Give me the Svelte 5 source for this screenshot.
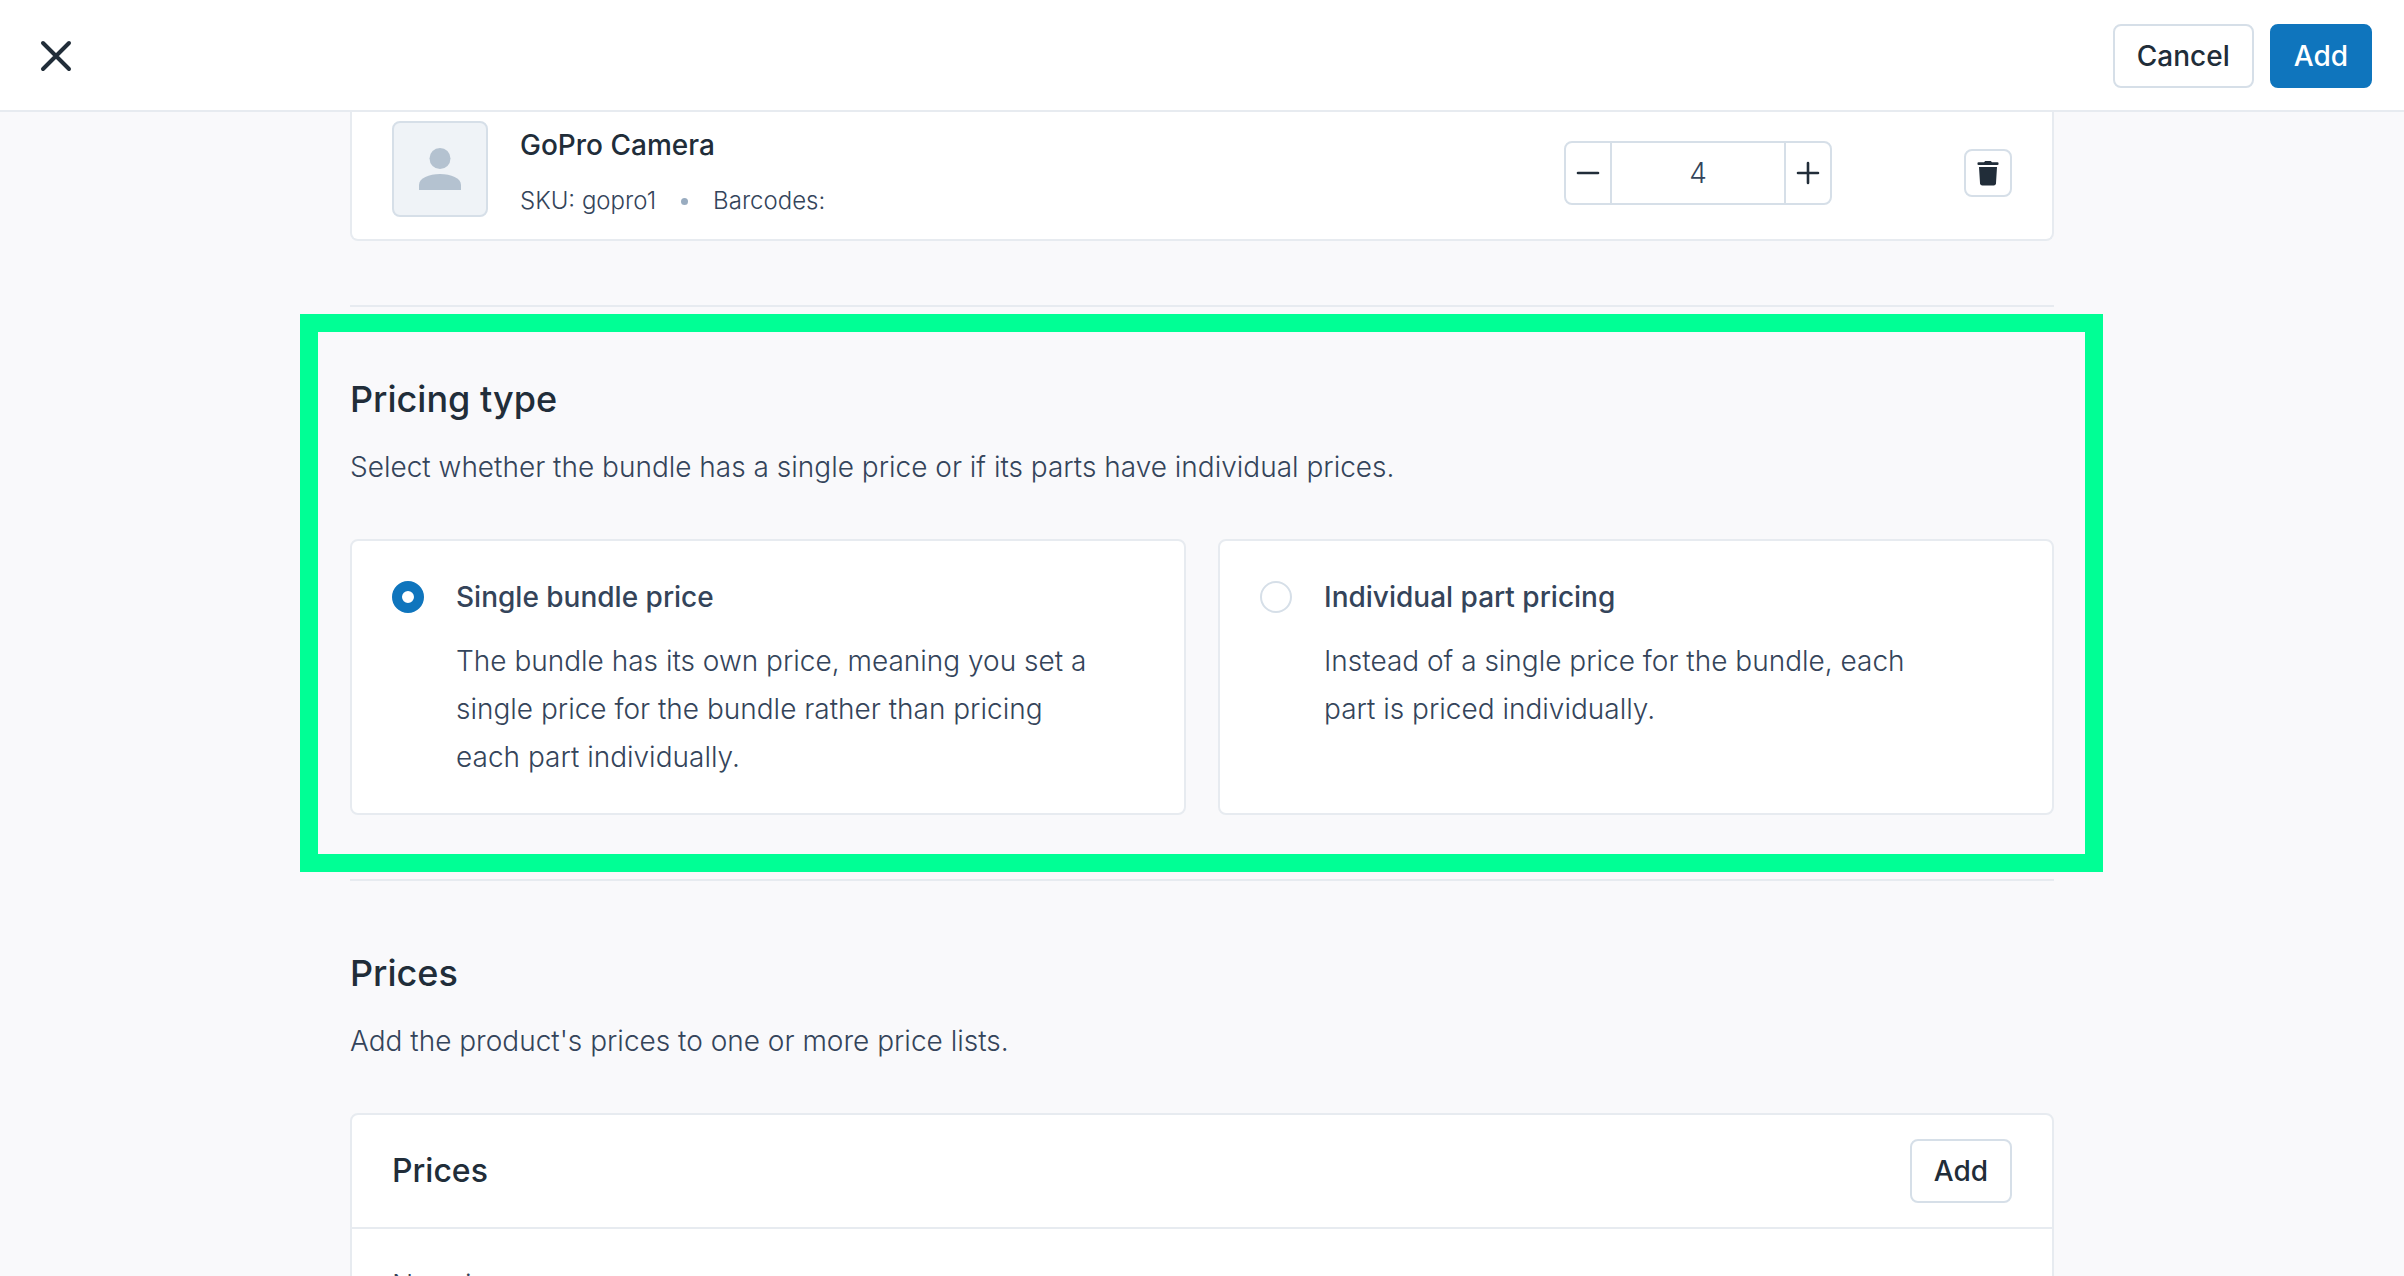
<script lang="ts">
  type PricingType = 'single' | 'individual';

  const pricingOptions: { value: PricingType; title: string; text: string }[] = [
    {
      value: 'single',
      title: 'Single bundle price',
      text: 'The bundle has its own price, meaning you set a single price for the bundle rather than pricing each part individually.',
    },
    {
      value: 'individual',
      title: 'Individual part pricing',
      text: 'Instead of a single price for the bundle, each part is priced individually.',
    },
  ];

  let quantity = $state(4);
  let pricingType = $state<PricingType>('single');
</script>

<header class="topbar">
  <button type="button" class="close" aria-label="Close">
    <svg width="32" height="32" viewBox="0 0 32 32" aria-hidden="true">
      <path d="M3 3 29 29M29 3 3 29" />
    </svg>
  </button>
  <div class="actions">
    <button type="button" class="btn">Cancel</button>
    <button type="button" class="btn btn-primary">Add</button>
  </div>
</header>

<main class="page">
  <div class="card part">
    <div class="thumb">
      <svg width="42" height="42" viewBox="0 0 42 42" aria-hidden="true">
        <circle cx="21" cy="10.5" r="10.5" />
        <path d="M0 42V37C0 30 10 26 21 26S42 30 42 37V42Z" />
      </svg>
    </div>
    <div class="part-info">
      <h3>GoPro Camera</h3>
      <p><span>SKU: gopro1</span><i class="dot"></i><span>Barcodes:</span></p>
    </div>
    <div class="part-controls">
      <div class="stepper">
        <button type="button" aria-label="Decrease quantity" onclick={() => quantity--}>
          <svg width="24" height="24" viewBox="0 0 24 24" aria-hidden="true"><path d="M2 12H22" /></svg>
        </button>
        <input type="text" inputmode="numeric" aria-label="Quantity" bind:value={quantity} />
        <button type="button" aria-label="Increase quantity" onclick={() => quantity++}>
          <svg width="24" height="24" viewBox="0 0 24 24" aria-hidden="true"><path d="M2 12H22M12 2V22" /></svg>
        </button>
      </div>
      <button type="button" class="remove" aria-label="Remove part">
        <svg width="24" height="26" viewBox="0 0 24 26" aria-hidden="true">
          <path d="M2.5 2.2H8L9.2 1H14.8L16 2.2H21.5Q22.5 2.2 22.5 3V4.2Q22.5 5 21.5 5H2.5Q1.5 5 1.5 4.2V3Q1.5 2.2 2.5 2.2Z" />
          <path d="M3 7H21L20 23.2Q19.8 25.500 17.7 25.500H6.3Q4.2 25.500 4 23.200Z" />
        </svg>
      </button>
    </div>
  </div>

  <section class="section highlighted">
    <h2>Pricing type</h2>
    <p class="lead">Select whether the bundle has a single price or if its parts have individual prices.</p>
    <div class="options">
      {#each pricingOptions as option (option.value)}
        <label class="card option">
          <input type="radio" name="pricing-type" value={option.value} bind:group={pricingType} />
          <span class="option-body">
            <span class="option-title">{option.title}</span>
            <span>{option.text}</span>
          </span>
        </label>
      {/each}
    </div>
  </section>

  <section class="section">
    <h2>Prices</h2>
    <p class="lead">Add the product's prices to one or more price lists.</p>
    <div class="card">
      <div class="card-head">
        <h3>Prices</h3>
        <button type="button" class="btn">Add</button>
      </div>
      <p class="empty">No prices</p>
    </div>
  </section>
</main>

<style>
  :global(body) {
    margin: 0;
    height: 100vh;
    overflow: hidden;
    background: #f9f9fb;
    color: #34445a;
    font-family: Inter, 'Liberation Sans', sans-serif;
    font-size: 28px;
    font-weight: 300;
    line-height: 48px;
  }
  h2,
  h3,
  p {
    margin: 0;
  }
  h2,
  h3 {
    color: #212d39;
    font-weight: 500;
  }
  button,
  input {
    box-sizing: border-box;
    margin: 0;
    font: inherit;
  }
  button {
    cursor: pointer;
  }

  .topbar {
    display: flex;
    align-items: center;
    justify-content: space-between;
    padding: 24px 32px 22px 40px;
    border-bottom: 2px solid #e7ebf0;
    background: #fff;
  }
  .close {
    display: flex;
    padding: 0;
    border: 0;
    background: transparent;
  }
  .close path {
    stroke: #212d39;
    stroke-width: 4;
    stroke-linecap: round;
  }
  .actions {
    display: flex;
    gap: 16px;
  }
  .btn {
    height: 64px;
    padding: 0 22px;
    border: 2px solid #d6dfe8;
    border-radius: 8px;
    background: #fff;
    color: #212d39;
    font-weight: 500;
    line-height: 56px;
  }
  .btn-primary {
    border-color: #0f75bd;
    background: #0f75bd;
    color: #fff;
  }

  .page {
    max-width: 1704px;
    margin: 0 auto;
  }
  .card {
    border: 2px solid #e7ebf0;
    border-radius: 8px;
    background: #fff;
  }

  .part {
    display: flex;
    align-items: flex-start;
    gap: 32px;
    margin-bottom: 64px;
    padding: 9px 40px 14px;
    border-top: 0;
    border-radius: 0 0 8px 8px;
  }
  .thumb {
    box-sizing: border-box;
    display: flex;
    align-items: center;
    justify-content: center;
    width: 96px;
    height: 96px;
    border: 2px solid #d6dfe8;
    border-radius: 8px;
    background: #eff3f7;
  }
  .thumb svg {
    fill: #b4c2d0;
  }
  .part-info {
    flex: 1;
  }
  .part-info h3 {
    margin-bottom: 8px;
    font-size: 28px;
  }
  .part-info p {
    display: flex;
    align-items: center;
    font-size: 24px;
  }
  .dot {
    width: 7px;
    height: 7px;
    margin: 0 25px;
    border-radius: 50%;
    background: #99acc0;
  }
  .part-controls {
    display: flex;
    align-items: center;
    align-self: center;
    gap: 132px;
  }
  .stepper {
    box-sizing: border-box;
    display: flex;
    width: 268px;
    height: 64px;
    border: 2px solid #d6dfe8;
    border-radius: 8px;
  }
  .stepper button {
    display: flex;
    align-items: center;
    justify-content: center;
    width: 44px;
    padding: 0;
    border: 0;
    background: transparent;
  }
  .stepper path {
    stroke: #212d39;
    stroke-width: 2.6;
    stroke-linecap: round;
  }
  .stepper input {
    flex: 1;
    min-width: 0;
    padding: 0;
    border: solid #d6dfe8;
    border-width: 0 2px;
    background: transparent;
    color: inherit;
    text-align: center;
  }
  .remove {
    display: flex;
    align-items: center;
    justify-content: center;
    width: 48px;
    height: 48px;
    padding: 0;
    border: 2px solid #d6dfe8;
    border-radius: 8px;
    background: #fff;
  }
  .remove svg {
    fill: #212d39;
  }

  .section {
    position: relative;
    padding: 64px 0;
    border-top: 2px solid #e7ebf0;
  }
  .section h2 {
    margin-bottom: 16px;
    font-size: 36px;
    line-height: 56px;
  }
  .lead {
    margin-bottom: 48px;
  }
  /* Callout frame round the section, wider than the column */
  .highlighted::after {
    content: '';
    position: absolute;
    inset: 7px -49px 7px -50px;
    border: 18px solid #00ff95;
    pointer-events: none;
  }

  .options {
    display: grid;
    grid-template-columns: 1fr 1fr;
    gap: 32px;
  }
  .option {
    display: flex;
    align-items: flex-start;
    gap: 32px;
    padding: 32px 40px;
    cursor: pointer;
  }
  .option input {
    flex: none;
    width: 32px;
    height: 32px;
    margin-top: 8px;
    border: 2px solid #d6dfe8;
    border-radius: 50%;
    background: #fff;
    appearance: none;
  }
  .option input:checked {
    border: 10px solid #0f75bd;
  }
  .option-body {
    display: flex;
    flex-direction: column;
    gap: 16px;
    max-width: 636px;
  }
  .option-title {
    font-weight: 500;
  }

  .card-head {
    display: flex;
    align-items: center;
    justify-content: space-between;
    padding: 24px 40px;
    border-bottom: 2px solid #e7ebf0;
  }
  .card-head h3 {
    font-size: 32px;
  }
  .empty {
    padding: 32px 40px;
  }
</style>
